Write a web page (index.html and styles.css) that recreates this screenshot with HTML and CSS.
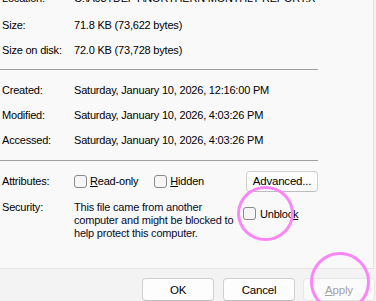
FILE: index.html
```html
<!DOCTYPE html>
<html lang="en">
<head>
  <meta charset="UTF-8" />
  <title>Properties</title>
  <link rel="stylesheet" href="styles.css">
</head>
<body>
  <div class="dialog">
    <div class="panel">
      <div class="row first">
        <span class="label">Location:</span>
        <span class="value">C:\A03TDEPT\NORTHERN MONTHLY REPORT.X</span>
      </div>
      <div class="row">
        <span class="label">Size:</span>
        <span class="value">71.8 KB (73,622 bytes)</span>
      </div>
      <div class="row">
        <span class="label">Size on disk:</span>
        <span class="value">72.0 KB (73,728 bytes)</span>
      </div>

      <div class="sep"></div>

      <div class="row">
        <span class="label">Created:</span>
        <span class="value">Saturday, January 10, 2026, 12:16:00 PM</span>
      </div>
      <div class="row">
        <span class="label">Modified:</span>
        <span class="value">Saturday, January 10, 2026, 4:03:26 PM</span>
      </div>
      <div class="row">
        <span class="label">Accessed:</span>
        <span class="value">Saturday, January 10, 2026, 4:03:26 PM</span>
      </div>

      <div class="sep sep-2"></div>

      <div class="row attrs">
        <span class="label">Attributes:</span>
        <div class="attr-list">
          <label class="check"><span class="box"></span><span><u>R</u>ead-only</span></label>
          <label class="check hidden-check"><span class="box"></span><span><u>H</u>idden</span></label>
          <button class="btn advanced">Advanced...</button>
        </div>
      </div>

      <div class="security">
        <span class="label">Security:</span>
        <p class="sec-text">This file came from another<br>computer and might be blocked to<br>help protect this computer.</p>
        <label class="check unblock"><span class="box"></span><span>Unbloc<u>k</u></span></label>
      </div>
    </div>

    <div class="footer">
      <button class="btn">OK</button>
      <button class="btn cancel">Cancel</button>
      <button class="btn apply" disabled><u>A</u>pply</button>
    </div>
  </div>

  <!-- annotation rings -->
  <div class="ring ring-unblock"></div>
  <div class="ring ring-apply"></div>
</body>
</html>
```

FILE: styles.css
```css
html, body {
  margin: 0;
  padding: 0;
  overflow: hidden;
}
body {
  width: 376px;
  height: 301px;
  font-family: "Liberation Sans", Arial, sans-serif;
  font-size: 11px;
  letter-spacing: -0.2px;
  color: #000;
  background-color: #f3f3f3;
  position: relative;
}
.dialog {
  display: flex;
  flex-direction: column;
  height: 301px;
}
.panel {
  width: 373px;
  height: 270px;
  background-color: #f9f9f9;
  border-right: 1px solid #e3e3e3;
  border-bottom: 1px solid #e3e3e3;
  overflow: hidden;
}
.row {
  display: grid;
  grid-template-columns: 72px 1fr;
  align-items: center;
  height: 25px;
  padding-left: 2px;
  white-space: nowrap;
}
.row.first {
  margin-top: -16px;
  height: 28px;
}
.label {
  display: block;
}
.sep {
  width: 318px;
  height: 1px;
  background-color: #a0a0a0;
  margin: 7px 0;
}
.sep-2 {
  margin: 8px 0 8px;
}
.row.attrs {
  height: 24px;
}
.attr-list {
  display: flex;
  align-items: center;
}
.check {
  display: flex;
  align-items: center;
  gap: 3px;
}
.box {
  display: block;
  width: 11px;
  height: 11px;
  border: 1px solid #8a8a8a;
  border-radius: 3px;
  background-color: #f6f6f6;
}
.hidden-check {
  margin-left: 16px;
}
.btn {
  font-family: "Liberation Sans", Arial, sans-serif;
  font-size: 11.5px;
  letter-spacing: -0.2px;
  color: #000;
  background-color: #fdfdfd;
  border: 1px solid #d0d0d0;
  border-bottom-color: #bdbdbd;
  border-radius: 4px;
  padding: 0;
  height: 21px;
}
.advanced {
  width: 72px;
  margin-left: auto;
  margin-right: 55px;
}
.security {
  display: grid;
  grid-template-columns: 72px 169px auto;
  padding-left: 2px;
  margin-top: 8px;
}
.sec-text {
  margin: 0;
  line-height: 13px;
  white-space: nowrap;
  color: #0a0a28;
}
.security .label {
  line-height: 13px;
}
.unblock {
  align-self: start;
  margin-top: 6px;
}
.unblock .box {
  margin-right: 1px;
}
.footer {
  display: flex;
  align-items: flex-start;
  padding: 9px 0 0 142px;
}
.footer .btn {
  width: 72px;
  height: 23px;
}
.footer .cancel {
  margin-left: 9px;
}
.footer .apply {
  margin-left: 8px;
  color: #a3a3a3;
  background-color: #fbfbfb;
  border-color: #e6e6e6;
}
.ring {
  position: absolute;
  box-sizing: border-box;
  border: 3px solid #fb86f8;
  border-radius: 50%;
}
.ring-unblock {
  left: 237px;
  top: 186px;
  width: 57px;
  height: 55px;
}
.ring-apply {
  left: 310px;
  top: 252px;
  width: 60px;
  height: 60px;
}
```
